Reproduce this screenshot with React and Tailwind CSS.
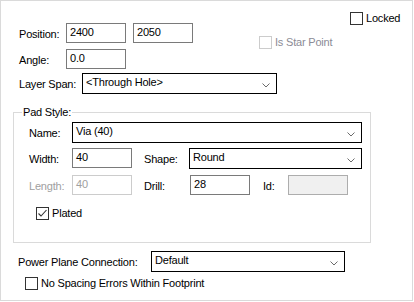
import React from 'react';

const Chevron = () => (
  <svg width="8" height="5" viewBox="0 0 8 5" className="mt-[7px] shrink-0">
    <polyline points="0.5,0.5 4,4 7.5,0.5" fill="none" stroke="#6b6b6b" strokeWidth="1" />
  </svg>
);

const TextBox = ({ value, w = 'w-[60px]', disabled, readOnly }) => (
  <div
    className={`h-[20px] ${w} border px-[3px] pt-[2px] ${
      disabled
        ? 'border-[#cccccc] text-[#a0a0a0] bg-white'
        : readOnly
        ? 'border-[#adadad] bg-[#f0f0f0]'
        : 'border-[#7a7a7a] bg-white text-black'
    }`}
  >
    {value}
  </div>
);

const Select = ({ value, w }) => (
  <div className={`h-[21px] ${w} border border-black bg-white flex justify-between pl-[3px] pr-[6px] pt-[2px]`}>
    <span>{value}</span>
    <Chevron />
  </div>
);

const Check = ({ label, checked, disabled, className = '' }) => (
  <div className={`flex items-start gap-[3px] ${className}`}>
    <div
      className={`w-[13px] h-[13px] border bg-white shrink-0 ${
        disabled ? 'border-[#cccccc]' : 'border-[#333333]'
      }`}
    >
      {checked && (
        <svg width="11" height="11" viewBox="0 0 11 11">
          <polyline points="1.5,5.5 4,8 9.5,2" fill="none" stroke="#333333" strokeWidth="1.1" />
        </svg>
      )}
    </div>
    <span className={`leading-[13px] ${disabled ? 'text-[#8b8b96]' : 'text-black'}`}>{label}</span>
  </div>
);

export default function App() {
  return (
    <div className="w-[414px] h-[302px] bg-white font-['Liberation_Sans',Arial,sans-serif] text-[11px] leading-[13px] tracking-[-0.2px] text-black">
      <div className="w-[413px] h-[301px] border border-[#dadada]">
        {/* top block */}
        <div className="flex">
          <div className="w-[258px] pl-[18px] pt-[22px] flex flex-col gap-[6px]">
            <div className="flex items-start">
              <span className="w-[47px] pt-[5px]">Position:</span>
              <TextBox value="2400" />
              <div className="w-[7px]" />
              <TextBox value="2050" />
            </div>
            <div className="flex items-start">
              <span className="w-[47px] pt-[5px]">Angle:</span>
              <TextBox value="0.0" />
            </div>
          </div>
          <div className="pt-[11px] flex flex-col">
            <Check label="Locked" className="ml-[91px]" />
            <Check label="Is Star Point" disabled className="mt-[11px]" />
          </div>
        </div>

        <div className="flex items-start pl-[18px] mt-[4px]">
          <span className="w-[63px] pt-[5px]">Layer Span:</span>
          <Select value="<Through Hole>" w="w-[195px]" />
        </div>

        <fieldset className="ml-[12px] mt-[12px] w-[358px] border border-[#dadada] pl-[15px] pt-[3px] pb-[22px]">
          <legend className="ml-[-7px] px-[1px]">Pad Style:</legend>
          <div className="flex items-start">
            <span className="w-[43px] pt-[5px]">Name:</span>
            <Select value="Via (40)" w="w-[290px]" />
          </div>
          <div className="flex items-start mt-[5px]">
            <span className="w-[43px] pt-[5px]">Width:</span>
            <TextBox value="40" />
            <span className="w-[45px] ml-[12px] pt-[5px]">Shape:</span>
            <Select value="Round" w="w-[173px]" />
          </div>
          <div className="flex items-start mt-[6px]">
            <span className="w-[43px] pt-[5px] text-[#a0a0a0]">Length:</span>
            <TextBox value="40" disabled />
            <span className="w-[46px] ml-[12px] pt-[5px]">Drill:</span>
            <TextBox value="28" />
            <span className="w-[25px] ml-[13px] pt-[5px]">Id:</span>
            <TextBox value="" readOnly />
          </div>
          <Check label="Plated" checked className="ml-[7px] mt-[12px]" />
        </fieldset>

        <div className="flex items-start pl-[17px] mt-[8px]">
          <span className="w-[133px] pt-[5px]">Power Plane Connection:</span>
          <Select value="Default" w="w-[194px]" />
        </div>
        <Check label="No Spacing Errors Within Footprint" className="ml-[24px] mt-[5px]" />
      </div>
    </div>
  );
}
